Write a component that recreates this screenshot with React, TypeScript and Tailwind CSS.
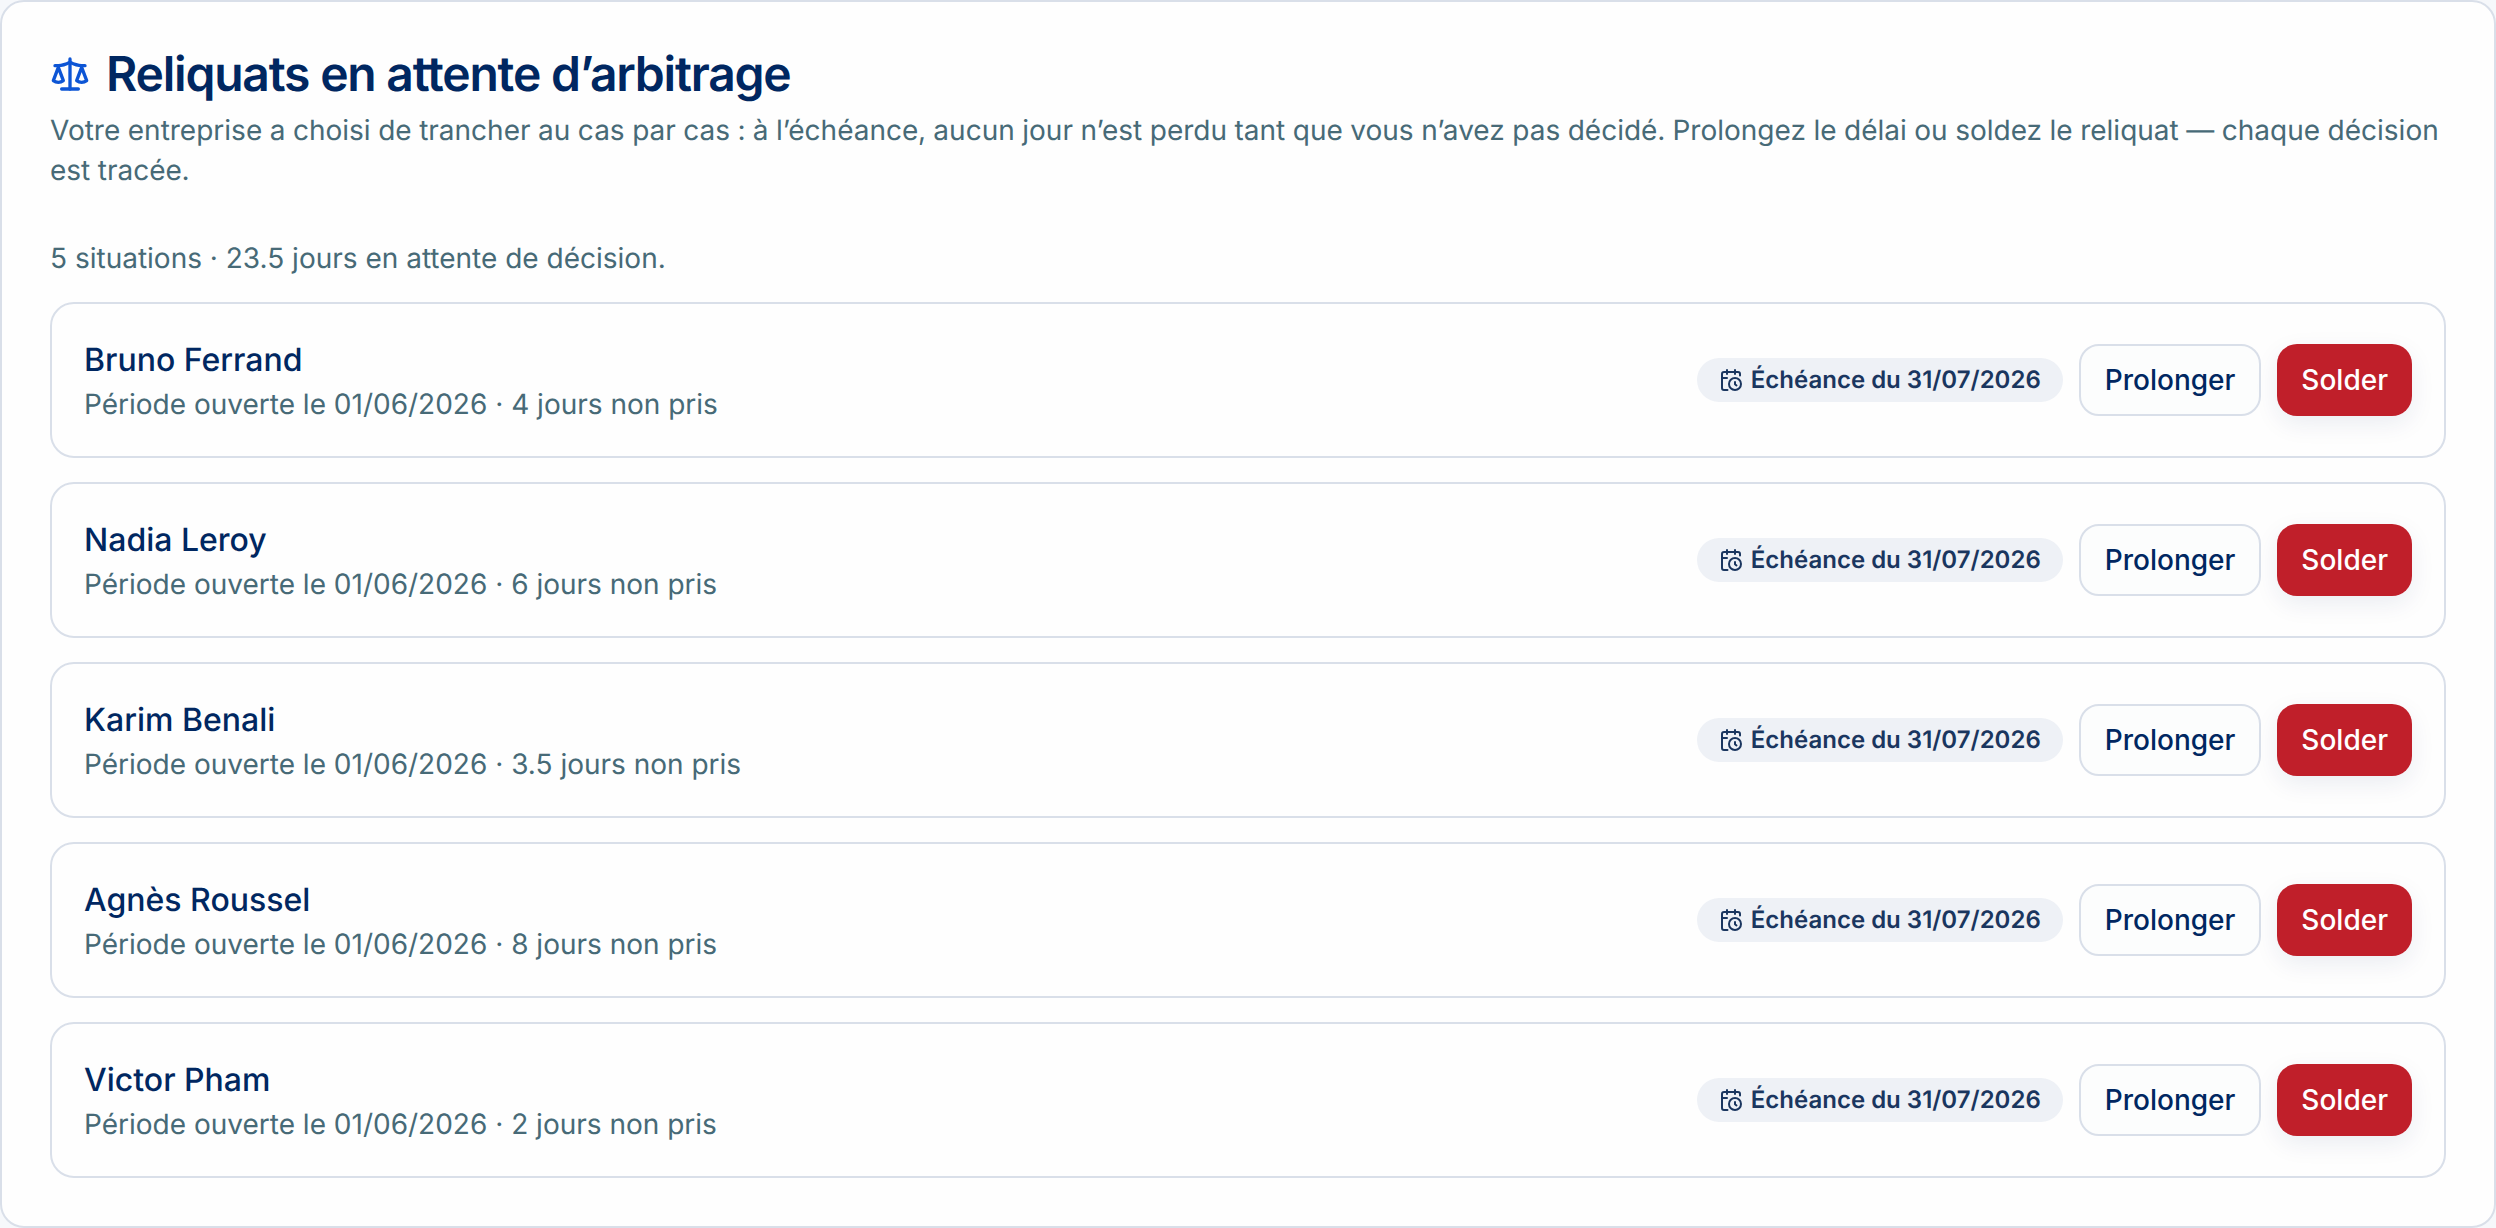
import { LuCalendarClock, LuScale } from "react-icons/lu";

interface Situation {
  id: number;
  name: string;
  openedOn: string;
  days: number;
  deadline: string;
}

const situations: Situation[] = [
  { id: 1, name: "Bruno Ferrand", openedOn: "01/06/2026", days: 4, deadline: "31/07/2026" },
  { id: 2, name: "Nadia Leroy", openedOn: "01/06/2026", days: 6, deadline: "31/07/2026" },
  { id: 3, name: "Karim Benali", openedOn: "01/06/2026", days: 3.5, deadline: "31/07/2026" },
  { id: 4, name: "Agnès Roussel", openedOn: "01/06/2026", days: 8, deadline: "31/07/2026" },
  { id: 5, name: "Victor Pham", openedOn: "01/06/2026", days: 2, deadline: "31/07/2026" },
];

const SituationRow = ({ situation }: { situation: Situation }) => (
  <li className="flex flex-wrap items-center justify-between gap-4 rounded-3xl border-2 border-[#d9dfe9] p-8">
    <div>
      <p className="text-[32px] leading-12 font-medium text-[#002761]">{situation.name}</p>
      <p className="text-[28px] leading-10 text-[#476a77]">
        Période ouverte le {situation.openedOn} · {situation.days} jours non pris
      </p>
    </div>
    <div className="flex flex-wrap items-center gap-4">
      <span className="flex items-center gap-2 rounded-full bg-[#eef1f6] px-[22px] py-1.5 text-2xl leading-8 font-semibold text-[#1a365f]">
        <LuCalendarClock className="size-6" />
        Échéance du {situation.deadline}
      </span>
      <button
        type="button"
        className="h-18 rounded-[20px] border-2 border-[#d9dfe9] bg-[#fcfdfd] px-6 text-[28px] leading-10 font-medium text-[#002761]"
      >
        Prolonger
      </button>
      <button
        type="button"
        className="h-18 rounded-[20px] bg-[#c01f2a] px-6 text-[28px] leading-10 font-medium text-white shadow-[0_8px_24px_rgba(0,39,97,0.08)]"
      >
        Solder
      </button>
    </div>
  </li>
);

const App = () => {
  const total = situations.reduce((sum, s) => sum + s.days, 0);

  return (
    <div className="bg-[#f6f8fb] font-['Inter',sans-serif] [text-rendering:geometricPrecision]">
      <section className="rounded-3xl border-2 border-[#d9dfe9] bg-[#fefefe] p-12">
        {/* Header */}
        <header className="mb-12">
          <h2 className="mb-3 flex items-center gap-4 text-5xl leading-12 font-semibold tracking-tight text-[#002761]">
            <LuScale className="size-10 text-[#0d55d5]" />
            Reliquats en attente d’arbitrage
          </h2>
          <p className="text-[28px] leading-10 text-[#476a77] tabular-nums">
            Votre entreprise a choisi de trancher au cas par cas : à l’échéance, aucun jour n’est perdu tant que vous
            n’avez pas décidé. Prolongez le délai ou soldez le reliquat — chaque décision est tracée.
          </p>
        </header>

        {/* Situations */}
        <p className="mb-6 text-[28px] leading-10 text-[#476a77]">
          {situations.length} situations · {total} jours en attente de décision.
        </p>
        <ul className="flex flex-col gap-6">
          {situations.map((situation) => (
            <SituationRow key={situation.id} situation={situation} />
          ))}
        </ul>
      </section>
    </div>
  );
};

export default App;
